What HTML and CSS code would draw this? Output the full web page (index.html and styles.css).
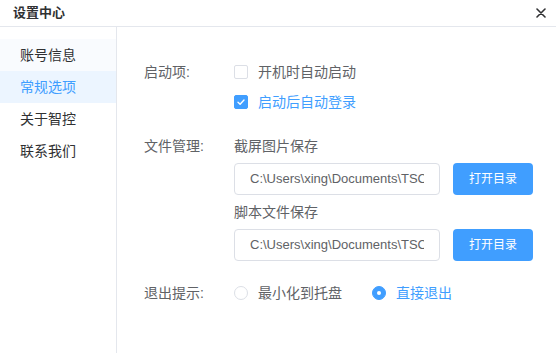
FILE: index.html
```html
<!DOCTYPE html>
<html lang="zh">
<head>
<meta charset="utf-8">
<title>设置中心</title>
<link rel="stylesheet" href="styles.css">
</head>
<body>
<div class="window">
  <div class="header">
    <span class="title">设置中心</span>
    <span class="close">
      <svg width="10" height="10" viewBox="0 0 10 10"><path d="M1 1L9 9M9 1L1 9" stroke="#303133" stroke-width="1.6" stroke-linecap="round"/></svg>
    </span>
  </div>
  <div class="main">
    <div class="sidebar">
      <div class="nav-item hover">账号信息</div>
      <div class="nav-item active">常规选项</div>
      <div class="nav-item">关于智控</div>
      <div class="nav-item">联系我们</div>
    </div>
    <div class="content">
      <div class="section startup">
        <div class="label">启动项:</div>
        <div class="body">
          <div class="opt">
            <span class="checkbox"></span>
            <span class="opt-text">开机时自动启动</span>
          </div>
          <div class="opt">
            <span class="checkbox checked">
              <svg width="14" height="14" viewBox="0 0 14 14"><path d="M4 7.2L6.1 9.2L10 5" fill="none" stroke="#fff" stroke-width="1.4" stroke-linecap="round" stroke-linejoin="round"/></svg>
            </span>
            <span class="opt-text on">启动后自动登录</span>
          </div>
        </div>
      </div>
      <div class="section files">
        <div class="label">文件管理:</div>
        <div class="body">
          <div class="sub">截屏图片保存</div>
          <div class="path-row">
            <div class="input"><span class="input-text">C:\Users\xing\Documents\TSC</span></div>
            <div class="btn">打开目录</div>
          </div>
          <div class="sub">脚本文件保存</div>
          <div class="path-row">
            <div class="input"><span class="input-text">C:\Users\xing\Documents\TSC</span></div>
            <div class="btn">打开目录</div>
          </div>
        </div>
      </div>
      <div class="section exit">
        <div class="label">退出提示:</div>
        <div class="body radios">
          <div class="opt">
            <span class="radio"></span>
            <span class="opt-text">最小化到托盘</span>
          </div>
          <div class="opt">
            <span class="radio checked"></span>
            <span class="opt-text on">直接退出</span>
          </div>
        </div>
      </div>
    </div>
  </div>
</div>
</body>
</html>
```

FILE: styles.css
```css
* { box-sizing: border-box; }
html, body {
  margin: 0;
  padding: 0;
  background: #fff;
}
body {
  font-family: "Liberation Sans", "Noto Sans CJK SC", sans-serif;
  color: #606266;
  width: 556px;
  height: 353px;
  overflow: hidden;
}
.window {
  display: flex;
  flex-direction: column;
  height: 353px;
}
.header {
  height: 27px;
  flex: none;
  border-bottom: 1px solid #e4e7ed;
  display: flex;
  align-items: center;
  justify-content: space-between;
  padding: 0 10px 0 13px;
}
.title {
  font-size: 13px;
  color: #303133;
  font-weight: bold;
  line-height: 26px;
}
.close {
  display: flex;
  width: 10px;
  height: 10px;
}
.main {
  flex: 1;
  display: flex;
}
.sidebar {
  width: 117px;
  flex: none;
  border-right: 1px solid #e4e7ed;
  padding-top: 12px;
}
.nav-item {
  height: 32px;
  line-height: 32px;
  padding-left: 20px;
  font-size: 14px;
  color: #303133;
}
.nav-item.hover { background: #f9fbfe; }
.nav-item.active {
  background: #ecf5ff;
  color: #409eff;
}
.content {
  flex: 1;
  padding: 30px 0 0 27px;
  font-size: 14px;
}
.section {
  display: flex;
}
.label {
  width: 90px;
  flex: none;
  line-height: 30px;
}
.body { flex: 1; }
.opt {
  display: flex;
  align-items: center;
  height: 30px;
}
.checkbox {
  width: 14px;
  height: 14px;
  border: 1px solid #dcdfe6;
  border-radius: 2px;
  display: flex;
  margin-right: 10px;
}
.checkbox.checked {
  background: #409eff;
  border-color: #409eff;
}
.checkbox svg { margin: -1px; }
.opt-text { line-height: 30px; }
.opt-text.on { color: #409eff; }
.files {
  margin-top: 14px;
}
.sub {
  line-height: 30px;
}
.path-row {
  display: flex;
  gap: 13px;
  margin-top: 2px;
  margin-bottom: 2px;
}
.input {
  width: 206px;
  height: 32px;
  border: 1px solid #dcdfe6;
  border-radius: 4px;
  padding: 0 15px;
  font-size: 13px;
  line-height: 30px;
  color: #606266;
}
.input-text {
  display: block;
  white-space: nowrap;
  overflow: hidden;
}
.btn {
  width: 80px;
  height: 32px;
  background: #409eff;
  color: #fff;
  border-radius: 4px;
  font-size: 12px;
  line-height: 32px;
  text-align: center;
}
.exit { margin-top: 15px; }
.radios {
  display: flex;
  gap: 30px;
}
.radio {
  width: 14px;
  height: 14px;
  border: 1px solid #dcdfe6;
  border-radius: 50%;
  margin-right: 10px;
  display: flex;
  align-items: center;
  justify-content: center;
}
.radio.checked {
  background: #409eff;
  border-color: #409eff;
}
.radio.checked::after {
  content: "";
  width: 4px;
  height: 4px;
  border-radius: 50%;
  background: #fff;
}
```
